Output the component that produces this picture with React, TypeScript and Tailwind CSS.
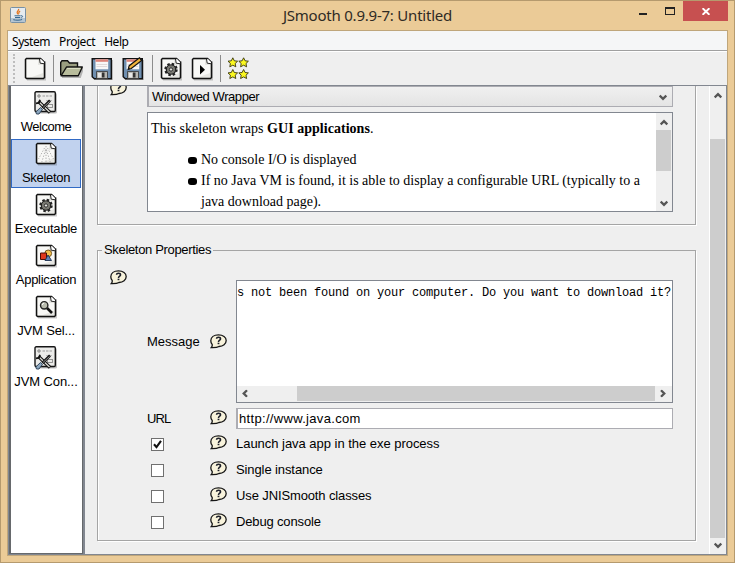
import type { ReactNode } from 'react';

const dark = '#111';

function Page({ children }: { children?: ReactNode }) {
  return (
    <svg className="block size-6 shrink-0" viewBox="0 0 24 24" fill="none">
      <path d="M4 4h19v19.5H4z" fill="#000" opacity=".2" />
      <path d="M2.5 1.5H18l3.500 3.500v16.500h-19z" fill="#e6e6e2" />
      <path d="M4 3h11v5h5v8L9 20H4z" fill="#f8f8f6" />
      <path d="M3.500 1.500H17.500L21.500 5.500v15l-1 1h-17l-1-1v-18z" stroke={dark} strokeWidth="1.500" />
      <path d="M16.500 2l.7 4.200 4.300.6V5L18 1.500z" fill="#fff" stroke={dark} strokeWidth=".9" />
      {children}
    </svg>
  );
}

function Gear() {
  return (
    <g>
      <circle cx="12" cy="12.500" r="5.600" stroke="#222" strokeWidth="2.200" strokeDasharray="2.400 2" />
      <circle cx="12" cy="12.500" r="4.600" fill="#8b8b86" stroke="#222" strokeWidth="1.400" />
      <circle cx="12" cy="12.500" r="3.100" stroke="#77776f" strokeWidth="1.200" />
      <circle cx="12" cy="12.500" r="1.700" fill="#e4e4df" stroke="#222" />
    </g>
  );
}

function ToolsIcon() {
  return (
    <svg className="block size-6 shrink-0" viewBox="0 0 24 24" fill="none">
      <rect x="2" y="2" width="21" height="20.500" rx="1.500" fill="#000" opacity=".25" />
      <rect x="1" y=".8" width="20.300" height="19.700" rx="1.200" fill="#ececea" stroke="#161616" strokeWidth="1.400" />
      <circle cx="5" cy="5" r="1.200" stroke="#666" strokeWidth=".8" />
      <path d="M8.500 5h10" stroke="#999" strokeDasharray="2.500 1" />
      <path d="M12 9.500h6" stroke="#bbb" />
      <rect x="13.500" y="13.500" width="5" height="3" stroke="#888" strokeWidth=".9" />
      <path d="M4.500 10.500L16 21.500" stroke="#111" strokeWidth="3.400" />
      <path d="M5 11l10.500 10" stroke="#deded8" strokeWidth="1.200" />
      <path d="M2 12.300l3-.5 1-3" stroke="#111" strokeWidth="1.800" />
      <path d="M16 9.500L8.500 17" stroke="#111" strokeWidth="2.600" />
      <path d="M15.500 10.500L9 16.500" stroke="#aaa" strokeWidth=".8" />
      <path d="M6.500 16.500l2 1.800-3.500 4.700H2.500l-.7-2z" fill="#8ba6bf" stroke="#34495e" />
    </svg>
  );
}

function SkeletonIcon() {
  return (
    <Page>
      <path d="M12 4v17M10.500 6L4.500 17M13.500 6l6 11M11.500 8L7.500 21M12.500 8l4 13" stroke="#999" strokeWidth=".8" strokeDasharray="1.300 1.600" />
    </Page>
  );
}

function GearIcon() {
  return <Page><Gear /></Page>;
}

function ShapesIcon() {
  return (
    <Page>
      <circle cx="14.200" cy="9.400" r="3.400" fill="#f2c04d" stroke="#6b4a12" strokeWidth=".9" />
      <path d="M6.500 9h6v6.500h-6z" fill="#e0381c" stroke="#4b0c05" />
      <path d="M14 11l3.500 5.500h-6.500z" fill="#5e82b5" stroke="#1d304f" strokeWidth=".9" />
    </Page>
  );
}

function SearchIcon() {
  return (
    <Page>
      <path d="M13 13l5 5" stroke="#111" strokeWidth="2.600" />
      <circle cx="10.200" cy="10.300" r="3.700" fill="#b9bcae" stroke="#222" strokeWidth="1.400" />
      <path d="M8.200 10a2.400 2.400 0 012-2" stroke="#fff" />
    </Page>
  );
}

function PlayIcon() {
  return <Page><path d="M10 8v9.500l5-4.750z" fill="#000" /></Page>;
}

function FolderIcon() {
  return (
    <svg className="block size-6 shrink-0" viewBox="0 0 24 24" fill="none">
      <path d="M3 20h18l3-9" stroke="#000" strokeOpacity=".25" strokeWidth="2" />
      <path d="M1.700 18V5.500L3 3.700h5.500l2 2.300h8v4" fill="#9a9e80" stroke={dark} strokeWidth="1.400" />
      <path d="M2 18.800L7.500 10h15.800L19.300 18.800z" fill="#b8bc9c" stroke={dark} strokeWidth="1.400" strokeLinejoin="round" />
      <path d="M8.200 11.400h13" stroke="#dfe2c8" />
    </svg>
  );
}

function SaveIcon({ pencil = false }: { pencil?: boolean }) {
  return (
    <svg className="block size-6 shrink-0" viewBox="0 0 24 24" fill="none">
      <path d="M4 3h19v20H4z" fill="#000" opacity=".22" />
      <path d="M2.200 1.700h19.100v20H4.400l-2.200-2z" fill="#6f8fb0" stroke={dark} strokeWidth="1.400" />
      <path d="M5.500 2.300h12.700v10H5.500z" fill="#f8f8f8" />
      <path d="M5.500 2.300h12.700v2.500H5.500z" fill="#dc8379" />
      <path d="M6.500 7.500h10.700m-10.700 2h10.700" stroke="#d9d0d0" strokeWidth=".8" />
      <path d="M6.500 14.500h11v7h-11z" fill="#b7b7b2" stroke="#333" strokeWidth=".8" />
      <path d="M8 16h3v4.500H8z" fill="#e8e8e8" />
      <path d="M12 15.500h2.500v5H12z" fill="#333" />
      {pencil && (
        <g>
          <path d="M7.200 12.300l1-3.600L18.500.8l2.200 2.700-10.400 8z" fill="#f0b33b" stroke={dark} strokeWidth="1.200" />
          <path d="M7 12.500l.6-2.200 1.500 1.700z" fill="#111" />
        </g>
      )}
    </svg>
  );
}

function StarsIcon() {
  const star = 'M4.800 0l1.500 3 3.300.4-2.400 2.300.6 3.300-3-1.600L1.800 9l.6-3.300L0 3.400 3.300 3z';
  return (
    <svg className="block size-6 shrink-0" viewBox="0 0 24 24">
      <g fill="#fbf820" stroke="#35330a" strokeWidth=".9" strokeLinejoin="round">
        <path d={star} transform="translate(2 .800)" />
        <path d={star} transform="translate(12.800 .800)" />
        <path d={star} transform="translate(2 12.500)" />
        <path d={star} transform="translate(12.800 12.500)" />
      </g>
    </svg>
  );
}

function JavaIcon() {
  return (
    <svg className="block size-4" viewBox="0 0 16 16" fill="none">
      <rect x=".5" y=".5" width="15" height="15" rx="1" fill="#e6ebef" stroke="#7890a4" />
      <path d="M1 11h14v4H1z" fill="#b5c5d2" />
      <path d="M8.500 1.800c1 1.700-2.300 2.500-1.200 4.300.4.700.9 1 .8 1.600M10.200 4c-1.600.8-1.700 1.500-.9 2.500" stroke="#e4761f" strokeWidth="1.300" />
      <path d="M4.500 8.800h6.200M5 10.500h5.300M3.300 12.700c3 .8 6.600.6 8.800-.2M11 8.800c2-.4 2.200 1.300.2 2" stroke="#35678f" />
    </svg>
  );
}

function HelpIcon() {
  return (
    <svg className="block h-[15px] w-[17px] shrink-0" viewBox="0 0 17 15" fill="none">
      <path d="M2.200 10.500C1.200 9.500.8 8.200.8 6.800.8 3.300 4 .9 8.500.9s7.700 2.400 7.700 5.700-3.200 5.700-7.200 5.900c-1.800 1.200-4.500 1.300-7.800 1.200.8-.8 1.200-2 1-3.200z" fill="#f8f3dc" stroke="#151515" strokeWidth="1.300" />
      <path d="M6.500 4.800c.1-2 4-2 4 .1 0 1.200-2 1.400-2 3" stroke="#1c1f2b" strokeWidth="1.600" />
      <path d="M7.600 8.700h1.800v1.500H7.600z" fill="#1c1f2b" />
    </svg>
  );
}

const turns = {
  up: '',
  right: 'rotate-90',
  down: 'rotate-180',
  left: '-rotate-90',
};

function Arrow({ to }: { to: keyof typeof turns }) {
  return (
    <span className="flex size-[15px] shrink-0 items-center justify-center">
      <svg className={`block h-[7px] w-2 ${turns[to]}`} viewBox="0 0 8 7" fill="none">
        <path d="M.7 5.500L4 2.200l3.300 3.300" stroke="#555" strokeWidth="2.300" />
      </svg>
    </span>
  );
}

const steps = [
  { label: 'Welcome', icon: <ToolsIcon />, tracking: 'tracking-[-0.5px]' },
  { label: 'Skeleton', icon: <SkeletonIcon />, active: true, tracking: 'tracking-[-0.3px]' },
  { label: 'Executable', icon: <GearIcon />, tracking: 'tracking-[-0.2px]' },
  { label: 'Application', icon: <ShapesIcon />, tracking: 'tracking-[-0.3px]' },
  { label: 'JVM Sel...', icon: <SearchIcon />, tracking: 'tracking-[-0.15px]' },
  { label: 'JVM Con...', icon: <ToolsIcon />, tracking: 'tracking-[-0.1px]' },
];

const options = [
  { label: 'Launch java app in the exe process', checked: true, tracking: 'tracking-[-0.03px]' },
  { label: 'Single instance', checked: false, tracking: 'tracking-[-0.1px]' },
  { label: 'Use JNISmooth classes', checked: false, tracking: 'tracking-[-0.12px]' },
  { label: 'Debug console', checked: false, tracking: 'tracking-[-0.15px]' },
];

function TitleBar() {
  return (
    <header className="flex h-[29px] shrink-0 items-start">
      <div className="w-[141px] shrink-0 pt-[6px] pl-[9px]"><JavaIcon /></div>
      <h1 className="flex-1 pt-[3px] text-center font-['Noto_Sans'] text-[15px] leading-[23px] tracking-[-0.22px] whitespace-nowrap text-[#2f2a24]">
        JSmooth 0.9.9-7: Untitled
      </h1>
      <div className="flex w-[141px] shrink-0 justify-end">
        <div className="mt-[12px] mr-[18px] h-[2px] w-2 bg-[#222]" />
        <div className="mt-[6px] mr-2 h-2 w-[10px] border border-t-2 border-[#222]" />
        <div className="mr-[6px] flex h-5 w-[45px] items-center justify-center bg-[#c75050]">
          <svg className="block h-[7px] w-2" viewBox="0 0 8 7"><path d="M.6.2l6.800 6.600M7.400.2L.6 6.800" stroke="#fff" strokeWidth="1.900" /></svg>
        </div>
      </div>
    </header>
  );
}

function Separator() {
  return <div className="h-[27px] w-px shrink-0 bg-[#8c8c8c]" />;
}

function Toolbar() {
  return (
    <div className="flex h-[33px] shrink-0 items-center bg-[#efefef] pl-[5px]">
      <div className="mr-[8px] h-[29px] w-0 border-l-2 border-dotted border-[#bdbdbd]" />
      <Page />
      <div className="ml-[6px]"><Separator /></div>
      <div className="mr-[7px] ml-[5px]"><FolderIcon /></div>
      <div className="mr-[7px]"><SaveIcon /></div>
      <SaveIcon pencil />
      <div className="mr-[6px] ml-[7px]"><Separator /></div>
      <div className="mr-[7px]"><GearIcon /></div>
      <PlayIcon />
      <div className="mr-[5px] ml-[6px]"><Separator /></div>
      <StarsIcon />
    </div>
  );
}

function Sidebar() {
  return (
    <nav className="flex w-[77px] shrink-0 border-r-2 border-b border-l border-[#828790]">
      <div className="flex flex-1 flex-col gap-[2px] border-r border-b border-l-2 border-[#66696c] bg-white pt-[2px] pr-px">
        {steps.map((s) => (
          <div
            key={s.label}
            className={`flex h-[49px] shrink-0 flex-col items-center gap-1 border pt-[2px] ${s.active ? 'border-[#316ac5] bg-[#c1d2ee]' : 'border-transparent'}`}
          >
            {s.icon}
            <span className={`leading-4 whitespace-nowrap ${s.tracking}`}>{s.label}</span>
          </div>
        ))}
      </div>
    </nav>
  );
}

function Description() {
  return (
    <div className="mt-[5px] flex h-[100px] w-[526px] border border-[#828790] bg-white">
      <div className="flex-1 overflow-hidden pt-[5px] pl-[3px] font-['Liberation_Serif',serif] text-[14px] leading-[21px] whitespace-nowrap">
        <p className="tracking-[0.03px]">This skeleton wraps <b>GUI applications</b>.</p>
        <ul className="mt-[10px] pl-[37px]">
          <li className="flex items-center"><i className="mt-px mr-1 h-[7px] w-[9px] rounded-[3px] bg-black" />No console I/O is displayed</li>
          <li className="flex items-center"><i className="mt-px mr-1 h-[7px] w-[9px] rounded-[3px] bg-black" />If no Java VM is found, it is able to display a configurable URL (typically to a</li>
          <li className="pl-[13px]">java download page).</li>
        </ul>
      </div>
      <div className="flex w-[16px] flex-col bg-[#efefef] pt-[2px]">
        <Arrow to="up" />
        <div className="h-[41px] w-[15px] bg-[#cdcdcd]" />
        <div className="flex-1" />
        <Arrow to="down" />
      </div>
    </div>
  );
}

function WrapperGroup() {
  return (
    <section className="flex h-[139px] shrink-0 overflow-hidden border-x border-b border-[#a5a5a5] pl-[12px] shadow-[1px_1px_0_#fff,inset_1px_0_0_#fff]">
      <div className="-mt-[5px] w-[37px] shrink-0"><HelpIcon /></div>
      <div>
        <div className="flex h-[21px] w-[526px] items-center border border-l-2 border-[#acacb2] bg-linear-to-b from-[#f0f0f0] to-[#e4e4e4] pr-[2px] pl-[3px]">
          <span className="flex-1 leading-4 tracking-[-0.42px]">Windowed Wrapper</span>
          <div className="mt-[2px]"><Arrow to="down" /></div>
        </div>
        <Description />
      </div>
    </section>
  );
}

function PropertiesGroup() {
  return (
    <fieldset className="mt-[16px] h-[300px] shrink-0 border border-[#a5a5a5] pl-[12px] shadow-[1px_1px_0_#fff,inset_1px_0_0_#fff]">
      <legend className="-ml-[8px] h-[18px] px-[2px] leading-[18px] tracking-[-0.33px]">Skeleton Properties</legend>
      <div className="flex h-[21px] flex-col pt-[11px]"><HelpIcon /></div>
      <div className="flex h-[123px] items-center pl-[37px]">
        <span className="w-[63px]">Message</span>
        <HelpIcon />
        <div className="ml-[9px] flex h-[123px] w-[437px] flex-col border border-[#828790] bg-white">
          <div className="flex-1 overflow-hidden pt-[4px] font-['Liberation_Mono',monospace] text-[12px] leading-4 tracking-[-0.2px] whitespace-nowrap">
            s not been found on your computer. Do you want to download it?
          </div>
          <div className="flex h-[16px] items-start bg-[#efefef]">
            <Arrow to="left" />
            <div className="w-[45px]" />
            <div className="h-[15px] flex-1 bg-[#cdcdcd]" />
            <Arrow to="right" />
            <div className="w-[2px]" />
          </div>
        </div>
      </div>
      <div className="mt-[5px] flex h-[21px] items-center pl-[37px]">
        <span className="w-[63px] tracking-[-0.9px]">URL</span>
        <div className="-mt-[2px]"><HelpIcon /></div>
        <div className="ml-[9px] h-[21px] w-[437px] border border-l-2 border-[#acacb2] bg-white pl-px leading-[20px] tracking-[0.32px]">http://www.java.com</div>
      </div>
      <div className="mt-[2px]">
        {options.map((o) => (
          <div key={o.label} className="flex h-[26px] items-center pl-[41px]">
            <span className="flex size-[13px] items-center justify-center border border-[#707070] bg-white">
              {o.checked && (
                <svg className="block size-[9px]" viewBox="0 0 9 9" fill="none"><path d="M1 4.200l2.500 2.900L8 .9" stroke="#111" strokeWidth="2.100" /></svg>
              )}
            </span>
            <span className="-mt-[3px] mr-[9px] ml-[46px]"><HelpIcon /></span>
            <span className={`leading-4 whitespace-nowrap ${o.tracking}`}>{o.label}</span>
          </div>
        ))}
      </div>
    </fieldset>
  );
}

export default function App() {
  return (
    <div className="flex h-[563px] w-[735px] flex-col overflow-hidden border border-[#b59a6e] bg-[#ebcb97] px-[6px] pb-[6px] font-['Liberation_Sans',sans-serif] text-[13px] text-black">
      <div className="-mx-[6px]"><TitleBar /></div>
      <div className="flex flex-1 flex-col border border-[#bfa67b] bg-[#efefef]">
        <nav className="flex h-[19px] shrink-0 gap-[9px] bg-[#f5f6f7] pl-[4px] font-['Noto_Sans'] text-[12px] leading-[21px] tracking-[-0.45px]">
          <span>System</span>
          <span>Project</span>
          <span>Help</span>
        </nav>
        <div className="h-[2px] shrink-0 border-t border-[#a0a0a0] bg-white" />
        <Toolbar />
        <div className="h-px shrink-0 bg-[#828790]" />
        <div className="flex min-h-0 flex-1">
          <Sidebar />
          <main className="flex flex-1 border-r border-b border-[#828790]">
            <div className="flex w-[625px] shrink-0 flex-col border-r border-white pr-[13px] pl-[12px]">
              <WrapperGroup />
              <PropertiesGroup />
            </div>
            <div className="flex w-[15px] shrink-0 flex-col pt-[2px]">
              <Arrow to="up" />
              <div className="h-[36px]" />
              <div className="flex-1 bg-[#cdcdcd]" />
              <Arrow to="down" />
              <div className="h-px" />
            </div>
          </main>
        </div>
      </div>
    </div>
  );
}
